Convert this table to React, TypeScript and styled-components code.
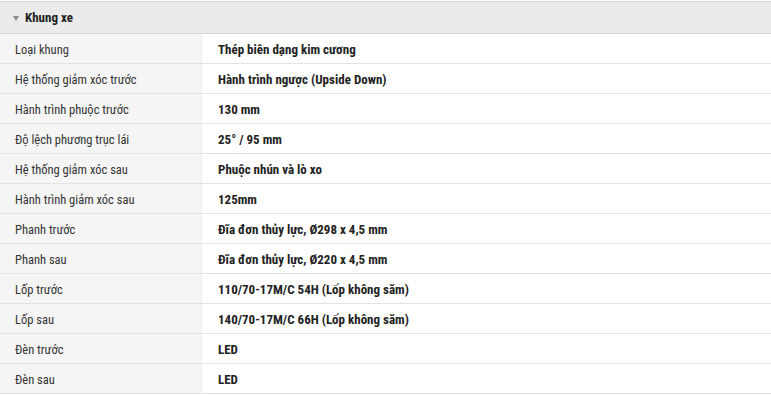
import React from 'react';
import styled, { createGlobalStyle } from 'styled-components';

const Global = createGlobalStyle`
  html, body { margin: 0; padding: 0; background: #fff; }
  body { font-family: 'Roboto Condensed', 'Liberation Sans Narrow', Roboto, sans-serif; }
`;

const Section = styled.section`
  width: 771px;
  padding-top: 1px;
  box-sizing: border-box;
`;

/* ─── collapsible group title ─── */
const Header = styled.div`
  display: flex;
  align-items: center;
  gap: 6px;
  height: 31px;
  padding-left: 13px;
  background: #ecebeb;
  border-top: 1px solid #d8d6d6;
  border-bottom: 1px solid #d8d6d6;
  font-size: 13px;
  font-weight: 700;
  color: #222;
`;

const Caret = styled.span`
  width: 0;
  height: 0;
  border-left: 3.5px solid transparent;
  border-right: 3.5px solid transparent;
  border-top: 5px solid #8a8a8a;
  margin-top: 1px;
`;

/* ─── spec rows ─── */
const Table = styled.div`
  display: grid;
  grid-template-columns: 202px 1fr;
`;

const Cell = styled.div<{ $label?: boolean }>`
  display: flex;
  align-items: center;
  height: 28px;
  padding-top: 1px;
  padding-left: ${p => (p.$label ? '15px' : '16px')};
  background: ${p => (p.$label ? '#f5f5f5' : '#fff')};
  border-bottom: 1px solid #e3e3e3;
  border-right: ${p => (p.$label ? '1px solid #ececec' : 'none')};
  font-size: ${p => (p.$label ? '12.5px' : '13px')};
  font-weight: ${p => (p.$label ? 400 : 700)};
  color: ${p => (p.$label ? '#333' : '#222')};
  white-space: nowrap;
`;

const SPECS: [string, string][] = [
  ['Loại khung', 'Thép biên dạng kim cương'],
  ['Hệ thống giảm xóc trước', 'Hành trình ngược (Upside Down)'],
  ['Hành trình phuộc trước', '130 mm'],
  ['Độ lệch phương trục lái', '25° / 95 mm'],
  ['Hệ thống giảm xóc sau', 'Phuộc nhún và lò xo'],
  ['Hành trình giảm xóc sau', '125mm'],
  ['Phanh trước', 'Đĩa đơn thủy lực, Ø298 x 4,5 mm'],
  ['Phanh sau', 'Đĩa đơn thủy lực, Ø220 x 4,5 mm'],
  ['Lốp trước', '110/70-17M/C 54H (Lốp không săm)'],
  ['Lốp sau', '140/70-17M/C 66H (Lốp không săm)'],
  ['Đèn trước', 'LED'],
  ['Đèn sau', 'LED'],
];

export default function App() {
  return (
    <>
      <Global />
      <Section>
        <Header>
          <Caret />
          Khung xe
        </Header>
        <Table>
          {SPECS.map(([k, v]) => (
            <React.Fragment key={k}>
              <Cell $label>{k}</Cell>
              <Cell>{v}</Cell>
            </React.Fragment>
          ))}
        </Table>
      </Section>
    </>
  );
}
